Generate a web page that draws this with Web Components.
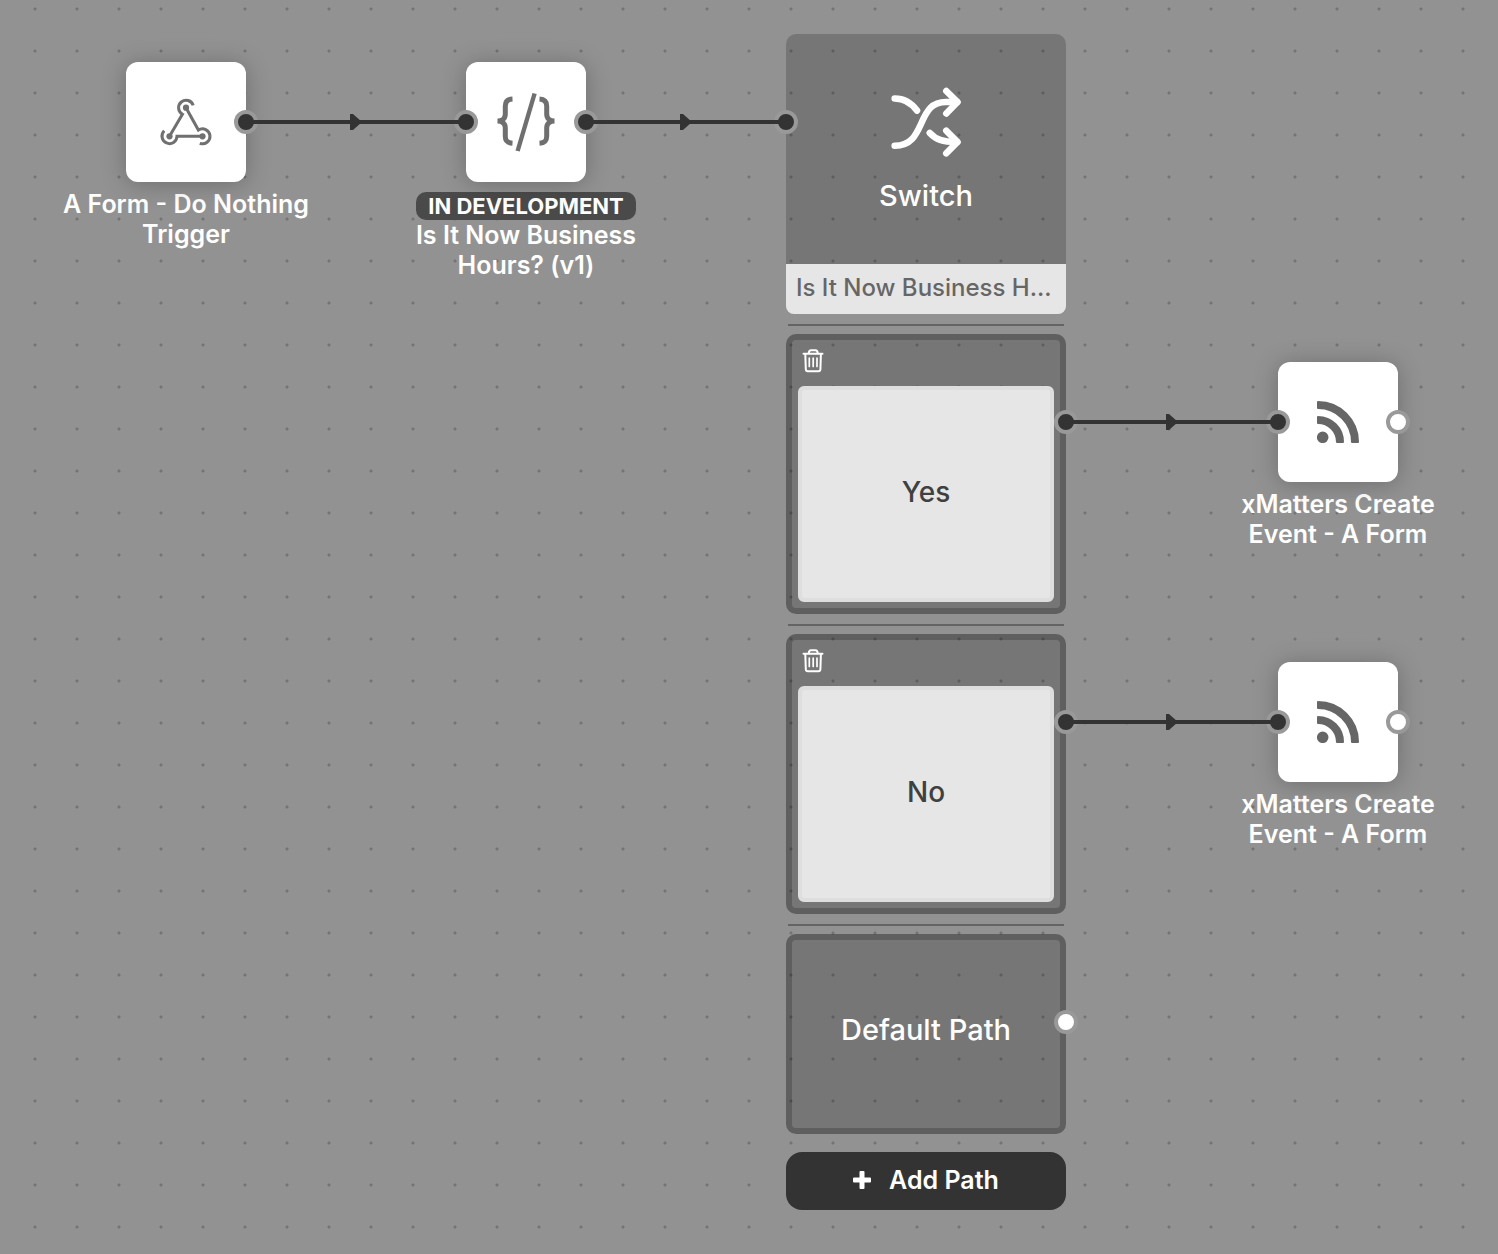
<!DOCTYPE html>
<html lang="en">
<head>
<meta charset="utf-8">
<title>Flow Designer</title>
<style>
  body { margin: 0; font-family: Inter, "Open Sans", sans-serif; color: #fff; background: #929292; }
  /* Node positions are the user's own layout of the free canvas. */
  flow-node, flow-switch, flow-wire { position: absolute; left: var(--x); top: var(--y); }
  flow-wire { z-index: 1; }
</style>
</head>
<body>
<flow-canvas>
  <flow-wire style="--x:246px;--y:114px;--length:220px"></flow-wire>
  <flow-wire style="--x:586px;--y:114px;--length:200px"></flow-wire>

  <flow-node icon="webhook" output="linked" style="--x:56px;--y:62px">A Form - Do Nothing Trigger</flow-node>
  <flow-node icon="code" input="linked" output="linked" style="--x:396px;--y:62px">
    <flow-badge slot="badge">IN DEVELOPMENT</flow-badge>Is It Now Business Hours? (v1)
  </flow-node>

  <flow-switch style="--x:786px;--y:34px">
    <span slot="title">Switch</span>
    <span slot="source">Is It Now Business H...</span>
    <switch-path value="Yes"></switch-path>
    <switch-path value="No"></switch-path>
    <switch-default>Default Path</switch-default>
  </flow-switch>

  <flow-wire style="--x:1066px;--y:414px;--length:212px"></flow-wire>
  <flow-wire style="--x:1066px;--y:714px;--length:212px"></flow-wire>
  <flow-node icon="feed" input="linked" output="open" style="--x:1208px;--y:362px">xMatters Create Event - A Form</flow-node>
  <flow-node icon="feed" input="linked" output="open" style="--x:1208px;--y:662px">xMatters Create Event - A Form</flow-node>
</flow-canvas>

<script>
const ICONS = {
  webhook: `<svg width="60" height="60" viewBox="0 0 60 60" fill="none" stroke="#707070" stroke-width="3" aria-hidden="true">
    <path d="M37.2 13.4A7.5 7.5 0 1 0 26.4 22.3L13.5 44.3"/>
    <path d="M8.2 38.8A7.5 7.5 0 1 0 21 44.3H46.5"/>
    <path d="M43.8 51.3A7.5 7.5 0 1 0 42.4 38L30 15.7"/>
    <g fill="#707070" stroke="none"><circle cx="30" cy="15.7" r="3.1"/><circle cx="13.5" cy="44.3" r="3.1"/><circle cx="46.5" cy="44.3" r="3.1"/></g></svg>`,
  code: `<svg width="60" height="60" viewBox="0 0 60 60" fill="none" stroke="#6f6f6f" stroke-width="5" aria-hidden="true">
    <path d="M16.500 7C11 7.300 9.300 10 9.300 14V22C9.300 26.500 6.500 29 1.500 29C6.500 29 9.300 31.500 9.300 36V44.300C9.300 48.500 11 51 16.500 51.300"/>
    <path d="M43.500 7C49 7.300 50.700 10 50.700 14V22C50.700 26.500 53.500 29 58.500 29C53.500 29 50.700 31.500 50.700 36V44.300C50.700 48.500 49 51 43.500 51.300"/>
    <path d="M38.600 1.500L21.600 59" stroke-width="4.400"/></svg>`,
  feed: `<svg width="42" height="42" viewBox="0 0 42 42" fill="#666" stroke="#666" stroke-width="2" stroke-linejoin="round" aria-hidden="true">
    <path d="M1 1A40 40 0 0 1 41 41H35A34 34 0 0 0 1 7Z"/>
    <path d="M1 16A25 25 0 0 1 26 41H20A19 19 0 0 0 1 22Z"/>
    <circle cx="5.700" cy="36.300" r="4.800"/></svg>`,
  shuffle: `<svg width="80" height="80" viewBox="0 0 80 80" fill="none" stroke="#fff" stroke-width="6.600" stroke-linecap="round" stroke-linejoin="round" aria-hidden="true">
    <path d="M8.700 16.500C18 16.500 25 20.500 31 28.500"/>
    <path d="M8.700 63.800C25 63.800 30 53 35 42C41 28 46 20 60 20H71"/>
    <path d="M60.300 9L71.500 20L60.300 31.500"/>
    <path d="M43.800 51C50 57.500 56 60 71 60"/>
    <path d="M60.300 48.700L71.500 60L60.300 71.300"/></svg>`,
  trash: `<svg width="22" height="24" viewBox="0 0 22 24" fill="none" stroke="#fff" stroke-width="2" stroke-linecap="round" stroke-linejoin="round" aria-hidden="true">
    <path d="M1.500 4.700H20.500M6.700 4.500Q7 1.300 9 1.300H13.500Q15.500 1.300 15.800 4.500M3.300 5L3.800 20.300Q3.900 22.300 5.800 22.300H16.500Q18.300 22.300 18.400 20.300L18.900 5"/>
    <path d="M7.300 9V17.500M11.200 9V17.500M15 9V17.500" stroke-width="1.700"/></svg>`,
  plus: `<svg width="18" height="18" viewBox="0 0 18 18" fill="#fff" aria-hidden="true">
    <rect x="0" y="6.500" width="18" height="5" rx="1"/><rect x="6.500" y="0" width="5" height="18" rx="1"/></svg>`
};

function define(name, render) {
  customElements.define(name, class extends HTMLElement {
    constructor() {
      super();
      this.attachShadow({ mode: "open" });
    }
    connectedCallback() {
      const t = document.createElement("template");
      t.innerHTML = `<style>*{box-sizing:border-box}</style>` + render(this);
      this.shadowRoot.replaceChildren(t.content.cloneNode(true));
    }
  });
}

define("flow-canvas", () => `
  <style>
    :host { display: block; position: relative; min-height: 100vh; overflow: hidden;
      background: #929292 radial-gradient(circle at 21px 21px, #737373 1px, transparent 2px) 14px -12px / 42px 42px; }
  </style>
  <slot></slot>`);

define("flow-port", () => `
  <style>
    :host { display: block; box-sizing: border-box; width: 24px; height: 24px; border-radius: 50%;
      border: 4px solid #999; background: #333; }
    :host([state="open"]) { background: #fff; }
  </style>`);

define("flow-wire", () => `
  <style>
    :host { display: flex; align-items: center; justify-content: center; width: var(--length); height: 16px;
      background: linear-gradient(#333, #333) center / 100% 4px no-repeat; }
    svg { display: block; }
  </style>
  <svg width="12" height="16" viewBox="0 0 12 16" fill="#333" aria-hidden="true"><path d="M0 0H3L12 8L3 16H0Z"/></svg>`);

define("flow-badge", () => `
  <style>
    :host { display: block; padding: 0 12px; border-radius: 10px; background: #4a4a4a;
      font-size: 22px; font-weight: 700; line-height: 28px; white-space: nowrap; }
  </style>
  <slot></slot>`);

define("flow-node", el => `
  <style>
    :host { display: flex; flex-direction: column; align-items: center; width: 260px; }
    .tile { position: relative; display: flex; align-items: center; justify-content: center;
      width: 120px; height: 120px; border-radius: 12px; background: #fff; box-shadow: 0 2px 24px rgba(0, 0, 0, .25); }
    svg { display: block; }
    flow-port { position: absolute; top: 48px; }
    .in { left: -12px; }
    .out { right: -12px; }
    ::slotted(flow-badge) { margin-top: 3px; }
    .label { display: flex; flex-direction: column; align-items: center; padding: 7px 4px 0; }
    .name { font-size: 25px; font-weight: 600; line-height: 30px; text-align: center; }
  </style>
  <div class="tile">${ICONS[el.getAttribute("icon")]}
    ${el.hasAttribute("input") ? `<flow-port class="in" state="${el.getAttribute("input")}"></flow-port>` : ""}
    ${el.hasAttribute("output") ? `<flow-port class="out" state="${el.getAttribute("output")}"></flow-port>` : ""}
  </div>
  <div class="label"><slot name="badge"></slot><div class="name"><slot></slot></div></div>`);

define("flow-switch", () => `
  <style>
    :host { display: flex; flex-direction: column; width: 280px; }
    header { position: relative; border-radius: 10px 10px 8px 8px; }
    .face { display: flex; flex-direction: column; align-items: center; gap: 16px; height: 230px; padding-top: 48px;
      border-radius: 10px 10px 0 0; background: rgba(0, 0, 0, .19); font-size: 29px; font-weight: 500; line-height: 36px; }
    .source { height: 50px; padding: 0 10px; border-radius: 0 0 8px 8px; background: #e6e6e6; color: #666;
      font-size: 24px; font-weight: 500; line-height: 48px; white-space: nowrap; overflow: hidden; }
    svg { display: block; }
    flow-port { position: absolute; left: -12px; top: 76px; }
    button { display: flex; align-items: center; justify-content: center; gap: 18px; height: 58px; margin-top: 18px; padding: 0 0 2px;
      border: 0; border-radius: 16px; background: #333; color: #fff; font: 600 25px/30px Inter, "Open Sans", sans-serif; }
  </style>
  <header>
    <div class="face">${ICONS.shuffle}<slot name="title"></slot></div>
    <div class="source"><slot name="source"></slot></div>
    <flow-port state="linked"></flow-port>
  </header>
  <slot></slot>
  <button type="button">${ICONS.plus}<span>Add Path</span></button>`);

const CARD = `
    :host { display: block; }
    .rule { height: 2px; margin: 10px 2px 8px; background: #646464; }
    .card { position: relative; border: 6px solid rgba(0, 0, 0, .2); border-radius: 10px; background: rgba(0, 0, 0, .19); }
    flow-port { position: absolute; right: -18px; top: 70px; }`;

define("switch-path", el => `
  <style>${CARD}
    .card { padding: 0 6px 6px; }
    .tools { display: flex; height: 46px; padding: 9px 4px; }
    button { display: block; padding: 0; border: 0; background: none; height: 24px; }
    svg { display: block; }
    input { display: block; width: 100%; height: 216px; padding: 0 0 4px; border: 4px solid #dedede; border-radius: 6px;
      background: #e6e6e6; color: #404040; font: 500 28px/36px Inter, "Open Sans", sans-serif; text-align: center; outline: 0; }
  </style>
  <div class="rule"></div>
  <div class="card">
    <div class="tools"><button type="button" aria-label="Delete path">${ICONS.trash}</button></div>
    <input type="text" aria-label="Path value" value="${el.getAttribute("value")}">
    <flow-port state="linked"></flow-port>
  </div>`);

define("switch-default", () => `
  <style>${CARD}
    .card { display: flex; align-items: center; justify-content: center; height: 200px; padding-bottom: 8px;
      font-size: 29px; font-weight: 500; line-height: 36px; }
  </style>
  <div class="rule"></div>
  <div class="card"><slot></slot><flow-port state="open"></flow-port></div>`);
</script>
</body>
</html>
